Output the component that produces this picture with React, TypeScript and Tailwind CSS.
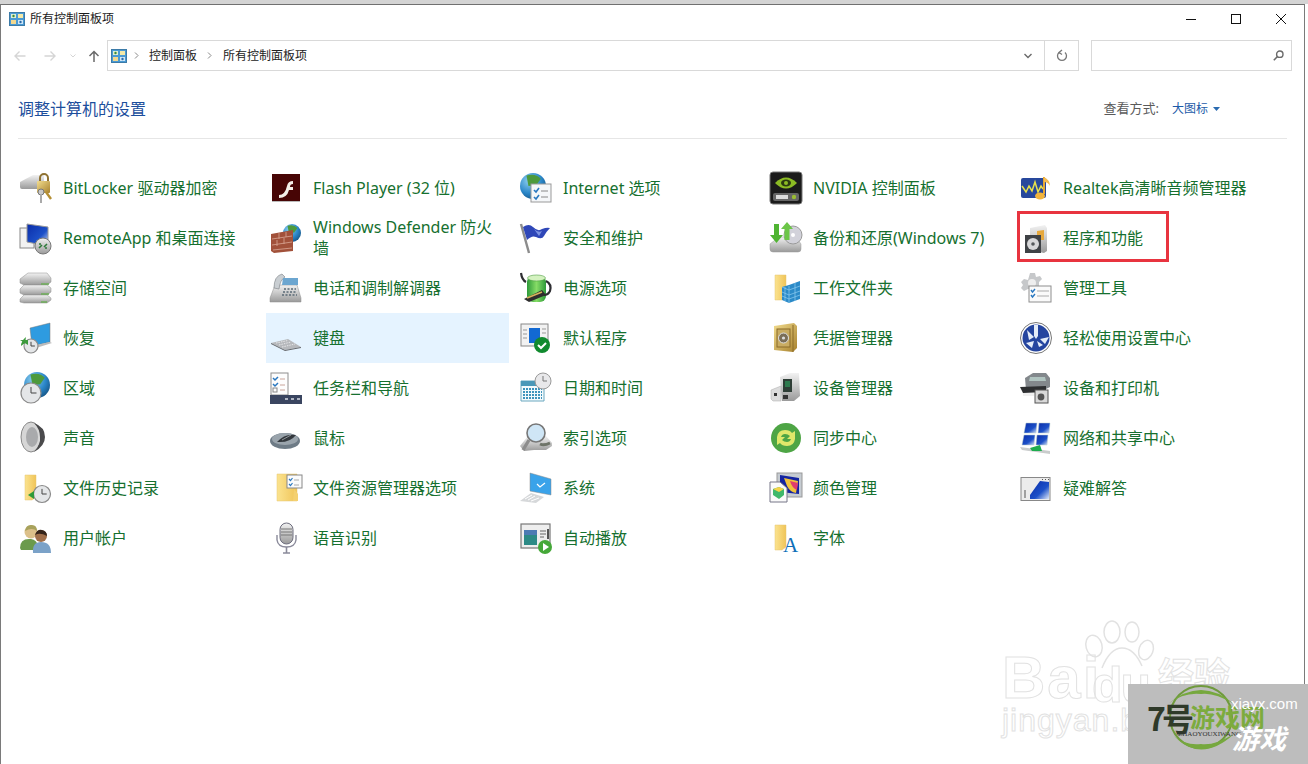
import { ReactNode } from 'react';

function Ico({ children }: { children: ReactNode }) {
  return (
    <svg width="32" height="32" viewBox="0 0 32 32" className="shrink-0 overflow-visible">
      {children}
    </svg>
  );
}

// shared gradients, referenced by the icons below
function Defs() {
  return (
    <svg width="0" height="0" className="absolute">
      <defs>
        <radialGradient id="globe" cx="0.35" cy="0.3" r="0.8">
          <stop offset="0" stopColor="#8fd0f0" />
          <stop offset="0.6" stopColor="#2a86c8" />
          <stop offset="1" stopColor="#14507f" />
        </radialGradient>
        <linearGradient id="folder" x1="0" y1="0" x2="1" y2="0">
          <stop offset="0" stopColor="#fbe38f" />
          <stop offset="1" stopColor="#f0c458" />
        </linearGradient>
        <linearGradient id="silver" x1="0" y1="0" x2="0" y2="1">
          <stop offset="0" stopColor="#f2f2f2" />
          <stop offset="1" stopColor="#9a9a9a" />
        </linearGradient>
        <linearGradient id="screen" x1="0" y1="0" x2="1" y2="1">
          <stop offset="0" stopColor="#0a2ca8" />
          <stop offset="0.6" stopColor="#1c50c8" />
          <stop offset="1" stopColor="#dfe8f8" />
        </linearGradient>
        <linearGradient id="gold" x1="0" y1="0" x2="1" y2="1">
          <stop offset="0" stopColor="#f2dc8e" />
          <stop offset="1" stopColor="#a8822e" />
        </linearGradient>
        <linearGradient id="batt" x1="0" y1="0" x2="1" y2="0">
          <stop offset="0" stopColor="#2e9a3a" />
          <stop offset="0.5" stopColor="#86dc66" />
          <stop offset="1" stopColor="#2e9a3a" />
        </linearGradient>
      </defs>
    </svg>
  );
}

function Globe({ x, y, r }: { x: number; y: number; r: number }) {
  return (
    <g>
      <circle cx={x} cy={y} r={r} fill="url(#globe)" />
      <path
        d={`M${x - r * 0.5} ${y - r * 0.8} q${r * 0.7} ${-r * 0.2} ${r * 1.1} ${r * 0.25} l${-r * 0.35} ${r * 0.5} l${-r * 0.6} ${r * 0.05} z`}
        fill="#4d9a3c"
      />
    </g>
  );
}

function Clock({ x, y, r }: { x: number; y: number; r: number }) {
  return (
    <g>
      <circle cx={x} cy={y} r={r} fill="#e4e6e8" stroke="#8a8a8a" strokeWidth="1.2" />
      <path d={`M${x} ${y - r * 0.6} V${y} H${x + r * 0.55}`} fill="none" stroke="#444" strokeWidth="1" />
    </g>
  );
}

function Folder() {
  return <path d="M5 3 h11 v22 l-4 3 H5 z" fill="url(#folder)" stroke="#e6c572" strokeWidth="0.5" />;
}

function Checklist({ x, y, w, h }: { x: number; y: number; w: number; h: number }) {
  return (
    <g>
      <rect x={x} y={y} width={w} height={h} fill="#fafafa" stroke="#8e8e8e" />
      <path d={`M${x + 2} ${y + 4} l1.5 2 l2.5 -3 M${x + 2} ${y + 9} l1.5 2 l2.5 -3`} fill="none" stroke="#2a78c0" strokeWidth="1.4" />
      <path d={`M${x + 8} ${y + 5} h${w - 10} M${x + 8} ${y + 10} h${w - 10}`} stroke="#aaa" />
    </g>
  );
}

function CPanel({ size }: { size: number }) {
  return (
    <svg width={size} height={size} viewBox="0 0 16 16" className="shrink-0">
      <rect x="0.5" y="1.5" width="15" height="13" fill="#4a9ad4" stroke="#3c7ba8" />
      <rect x="2" y="3" width="5" height="4" fill="#dff0d0" />
      <rect x="9" y="3" width="5" height="4" fill="#f4e9a8" />
      <rect x="2" y="9" width="5" height="4" fill="#f2d890" />
      <rect x="9" y="9" width="5" height="4" fill="#cfe6f6" />
      <circle cx="4.5" cy="5" r="1.2" fill="#3b8a3b" />
      <circle cx="11.5" cy="11" r="1.2" fill="#2a6aa8" />
    </svg>
  );
}

const icons: Record<string, ReactNode> = {
  bitlocker: (
    <Ico>
      <path d="M0 10 L13 3 H24 V17 H2 Q0 17 0 15z" fill="url(#silver)" />
      <path d="M20 10 V6 a4 4 0 0 1 8 0 V10" fill="none" stroke="#8f7232" strokeWidth="2" />
      <rect x="17" y="9" width="13" height="12" rx="1" fill="url(#gold)" />
      <circle cx="21" cy="20" r="3" fill="#c9c9c9" stroke="#777" />
      <rect x="20" y="22" width="2" height="9" fill="#aaa" />
      <path d="M26 20 l5 7" stroke="#b58f34" strokeWidth="2.4" />
    </Ico>
  ),
  flash: (
    <Ico>
      <rect x="2" y="2" width="28" height="27" fill="#470505" />
      <rect x="2" y="29" width="28" height="1" fill="#bbb" />
      <path d="M9 23 q6 0 8 -9 q1 -5 6 -5 v3 q-3 0 -3 3 h3 v3 h-4 q-2 8 -10 8z" fill="#f4efe8" />
    </Ico>
  ),
  ie: (
    <Ico>
      <Globe x={13} y={14} r={13} />
      <rect x="11" y="12" width="20" height="18" fill="#f5f7f9" stroke="#999" />
      <path d="M14 18 l2 2 l3 -4 M14 25 l2 2 l3 -4" fill="none" stroke="#2a78c0" strokeWidth="1.6" />
      <path d="M21 19 h7 M21 25 h7" stroke="#888" />
    </Ico>
  ),
  nvidia: (
    <Ico>
      <rect x="0" y="0" width="32" height="32" rx="3" fill="#1b1b1b" stroke="#777" />
      <path d="M5 11 q11 -11 22 0 q-11 11 -22 0z" fill="#8cbb24" />
      <ellipse cx="16" cy="11" rx="5" ry="3.400" fill="#2c3a10" />
      <circle cx="16" cy="11" r="2" fill="#8cbb24" />
      <rect x="3" y="21" width="26" height="8" rx="2" fill="#666" />
      <rect x="6" y="23" width="12" height="4" fill="#ddd" />
      <circle cx="24" cy="25" r="2.2" fill="#9bbd33" />
    </Ico>
  ),
  realtek: (
    <Ico>
      <rect x="1" y="6" width="25" height="20" rx="2" fill="#27489c" />
      <path d="M2 14 l4 6 l3 -6 l3 5 l3 -9 l3 10 l3 -6 l2 3" fill="none" stroke="#e9e24a" strokeWidth="1.5" />
      <path d="M24 5 V22" stroke="#e8a832" strokeWidth="2" />
      <path d="M24 5 q6 3 6 9 q-2 -4 -6 -4z" fill="#f2bb52" />
      <ellipse cx="20" cy="24" rx="5" ry="3.5" fill="#f2b43c" />
    </Ico>
  ),
  remote: (
    <Ico>
      <rect x="0" y="6" width="14" height="20" fill="#f2f2f2" stroke="#888" />
      <path d="M7 2 L28 5 V24 L7 20z" fill="url(#screen)" stroke="#999" />
      <circle cx="23" cy="24" r="8" fill="url(#silver)" stroke="#777" />
      <path d="M19 26 l3 -3 M27 22 l-3 3 M19 22 h2 M25 26 h2" stroke="#2e7a3a" strokeWidth="1.6" />
    </Ico>
  ),
  firewall: (
    <Ico>
      <Globe x={22} y={11} r={9} />
      <path d="M1 12 L23 8 V29 L4 31 L1 29z" fill="#a2513a" />
      <path d="M2 17 L22 14 M2 23 L22 20 M3 28 L22 26 M9 11 V17 M16 10 V15 M7 18 V24 M14 16 V22" stroke="#d9a796" strokeWidth="0.8" />
    </Ico>
  ),
  flag: (
    <Ico>
      <path d="M1 2 L9 31" stroke="#8c8c8c" strokeWidth="2.4" />
      <path d="M3 5 q6 -4 10 0 q5 5 9 2 q5 -2 8 -1 q-4 4 -6 8 q-2 4 -8 1 q-4 -2 -9 3z" fill="#2f47b8" />
      <path d="M14 7 q4 4 8 2 l-3 5z" fill="#7d93e2" />
    </Ico>
  ),
  backup: (
    <Ico>
      <path d="M0 22 L9 15 H26 L31 22 V27 Q31 30 28 30 H3 Q0 30 0 27z" fill="url(#silver)" stroke="#999" strokeWidth="0.5" />
      <circle cx="23" cy="13" r="9" fill="#d2d2da" stroke="#9a9a9a" />
      <circle cx="23" cy="13" r="2" fill="#fff" />
      <path d="M4 2 h5 v11 h4 l-6.500 8 l-6.500 -8 h4z" fill="#4fb432" />
      <path d="M17 0 l6 7 h-3.500 v11 h-5 V7 H11z" fill="#6cc648" />
    </Ico>
  ),
  programs: (
    <Ico>
      <path d="M10 6 L25 3 L27 6 V29 L24 31 L10 28z" fill="url(#silver)" />
      <path d="M17 9 L24 8 V18 H17z" fill="#e6a83c" />
      <rect x="5" y="13" width="16" height="18" fill="#3f4246" />
      <circle cx="13" cy="22" r="6" fill="#d8d8da" />
      <circle cx="13" cy="22" r="1.8" fill="#55585c" />
    </Ico>
  ),
  storage: (
    <Ico>
      <path d="M0 7 L8 1 H27 L31 6 V10 L27 13 H4 L0 11z" fill="url(#silver)" stroke="#8d8d8d" strokeWidth="0.5" />
      <path d="M0 17 L4 13 H27 L31 16 V20 L27 23 H4 L0 21z" fill="url(#silver)" stroke="#8d8d8d" strokeWidth="0.5" />
      <path d="M0 27 L4 23 H27 L31 26 V28 L27 31 H4 L0 30z" fill="url(#silver)" stroke="#8d8d8d" strokeWidth="0.5" />
      <path d="M21 12 h8 M21 22 h8 M21 30 h6" stroke="#6fae5a" strokeWidth="1.4" />
    </Ico>
  ),
  phone: (
    <Ico>
      <path d="M0 26 L5 13 H27 L31 26 V30 H0z" fill="url(#silver)" stroke="#8c8c8c" strokeWidth="0.5" />
      <path d="M4 16 Q4 4 12 2 L15 5 Q10 8 9 17z" fill="#c9ced2" stroke="#7a8084" strokeWidth="0.6" />
      <path d="M13 6 H28 L28 13 H12z" fill="#6ca6d0" />
      <path d="M14 17 h12 M13 20 h13 M12 23 h15" stroke="#5a6a76" strokeDasharray="2 1.5" strokeWidth="1.4" />
    </Ico>
  ),
  power: (
    <Ico>
      <rect x="7" y="4" width="19" height="26" rx="6" fill="url(#batt)" />
      <ellipse cx="16.5" cy="6" rx="9" ry="3" fill="#d4f2c0" stroke="#4f9e42" strokeWidth="0.6" />
      <path d="M1 1 Q2 8 6 10 M26 9 Q32 12 30 19 Q28 23 24 23" fill="none" stroke="#2e2e32" strokeWidth="2.2" />
      <path d="M4 27 L22 18 L26 23 L9 30z" fill="#2e2e2e" />
      <path d="M7 26 L22 20" stroke="#d8b45c" strokeWidth="1.6" />
    </Ico>
  ),
  work: (
    <Ico>
      <Folder />
      <path d="M19 13 L30 9 V27 L19 31 L12 28 V15z" fill="#2b8ac8" />
      <path d="M12 20 L19 23 L30 19 M12 24 L19 27 L30 23 M19 14 V31 M15 15 V29 M25 11 V29 M12 15 L19 18 L30 14" fill="none" stroke="#8fcdf0" strokeWidth="0.7" />
    </Ico>
  ),
  tools: (
    <Ico>
      <path d="M10 1 h5 l1 4 l4 -1 l2 3 l-3 3 v7 H8 L4 19 l-3 -3 l2 -3 l-2 -3 l3 -3 l4 1z" fill="#c6c8ca" />
      <circle cx="12" cy="11" r="4" fill="#eee" />
      <Checklist x={9} y={14} w={22} h={16} />
    </Ico>
  ),
  restore: (
    <Ico>
      <path d="M10 6 L30 1 V20 L12 24z" fill="#2e9be0" stroke="#777" strokeWidth="0.5" />
      <path d="M30 20 L32 21 L16 26 L12 24z" fill="#bbb" />
      <Clock x={11} y={24} r={7} />
      <path d="M6 15 Q1 19 1 24 L5 21z" fill="#3c9a3c" />
      <path d="M0 18 h8 v5z" fill="#3c9a3c" />
    </Ico>
  ),
  keyboard: (
    <Ico>
      <path d="M1 21 L18 17 L31 25 L15 28z" fill="#b6b8bc" />
      <path d="M6 21 L18 18.500 M9 23 L21 20 M12 25 L25 22" stroke="#e6e6e8" strokeWidth="1" strokeDasharray="1.5 1" />
      <path d="M1 21.500 L15 28.500 L31 25.500" fill="none" stroke="#66686c" strokeWidth="1" />
    </Ico>
  ),
  defaults: (
    <Ico>
      <rect x="1" y="2" width="27" height="22" fill="#f2f2f2" stroke="#888" />
      <rect x="9" y="6" width="11" height="15" fill="#1269d3" />
      <path d="M3 8 h4 M3 12 h4 M3 16 h4 M22 7 h4 M22 11 h4" stroke="#999" />
      <circle cx="22" cy="23" r="8" fill="#118a2e" />
      <path d="M18 23 l3 3 l5 -5" fill="none" stroke="#fff" strokeWidth="2" />
    </Ico>
  ),
  credential: (
    <Ico>
      <path d="M4 4 L24 1 L27 4 V26 L23 30 L4 28z" fill="url(#gold)" />
      <path d="M23 3 V30" stroke="#8a6a28" />
      <rect x="7" y="7" width="13" height="18" fill="#c9ac62" stroke="#8a6a28" />
      <circle cx="13.5" cy="16" r="5" fill="#7a6e58" stroke="#ddd" />
      <circle cx="13.5" cy="16" r="1.6" fill="#ddd" />
    </Ico>
  ),
  access: (
    <Ico>
      <circle cx="16" cy="16" r="15.5" fill="#fff" stroke="#777" />
      <circle cx="16" cy="16" r="13.5" fill="#25459f" />
      <path d="M14 3 h4 v11 l-2 3 l-2 -3z M29 15 l-9 2 l5 5z M7 8 l7 7 l-5 3z M6 21 l8 -2 l-2 7z M19 25 l-2 -6 l6 4z" fill="#e4ecf8" />
    </Ico>
  ),
  region: (
    <Ico>
      <Globe x={17} y={13} r={13} />
      <Clock x={11} y={21} r={10} />
    </Ico>
  ),
  taskbar: (
    <Ico>
      <rect x="1" y="1" width="17" height="22" fill="#fdfdfd" stroke="#8e8e8e" />
      <path d="M3 6 l2 2 l3 -3 M3 12 l2 2 l3 -3" fill="none" stroke="#2a78c0" strokeWidth="1.5" />
      <path d="M10 7 h5 M10 13 h5 M10 18 h5" stroke="#c9a49a" />
      <rect x="3" y="16" width="4" height="4" fill="none" stroke="#888" />
      <rect x="0" y="23" width="32" height="9" fill="#3a4560" />
      <path d="M15 27 h3 M21 27 h3 M27 27 h3" stroke="#b0b6c4" strokeWidth="2" />
    </Ico>
  ),
  calendar: (
    <Ico>
      <path d="M1 9 H24 V29 H1z" fill="#f4fafc" stroke="#6aa8c0" />
      <rect x="1" y="9" width="23" height="5" fill="#4a98b8" />
      <path d="M3 17 h19 M3 20 h19 M3 23 h19 M3 26 h19" stroke="#3e94bc" strokeWidth="2" strokeDasharray="2 1" />
      <circle cx="23" cy="9" r="8" fill="#e8e8ea" stroke="#999" />
      <path d="M23 4 V9 H27" fill="none" stroke="#777" />
    </Ico>
  ),
  devices: (
    <Ico>
      <path d="M10 5 L20 1 H29 L30 24 L24 29 H12z" fill="url(#silver)" />
      <rect x="13" y="7" width="9" height="13" fill="#2e3e36" />
      <path d="M15 9 h5 v6 h-5z" fill="#2e7a4e" />
      <path d="M1 18 L11 14 V29 H3 L1 27z" fill="#dcdcdc" stroke="#aaa" strokeWidth="0.5" />
      <path d="M4 21 h3 v3 h-3z M13 23 h5 v4 h-5z" fill="#333" />
    </Ico>
  ),
  printers: (
    <Ico>
      <path d="M5 6 L13 1 H26 L30 6 V15 L24 18 H6z" fill="#83888c" />
      <path d="M10 5 H25 L26 9 H9z" fill="#b0c4c0" />
      <path d="M0 15 L26 14 L26 20 L3 21z" fill="#2d2f31" />
      <path d="M3 21 H14 V24 H3z" fill="#f0f0f0" />
      <rect x="15" y="18" width="13" height="13" fill="#d9d9d9" stroke="#555" />
      <circle cx="21" cy="25" r="3.4" fill="#555" />
    </Ico>
  ),
  mouse: (
    <Ico>
      <ellipse cx="15" cy="19" rx="15" ry="8" fill="#6e7b86" />
      <ellipse cx="15" cy="17" rx="13" ry="6" fill="#9aa4ac" />
      <path d="M7 20 Q15 11 26 13 Q20 21 7 20z" fill="#33383d" />
      <path d="M12 18 L21 13" stroke="#8f959a" strokeWidth="1" />
    </Ico>
  ),
  index: (
    <Ico>
      <path d="M0 24 L8 14 H26 L32 21 V24 L26 28 H14 L4 29z" fill="url(#silver)" />
      <circle cx="16" cy="11" r="9" fill="#cfe6f6" stroke="#777" strokeWidth="1.6" />
      <path d="M9 18 L3 28" stroke="#8c8c8c" strokeWidth="3.4" />
      <path d="M20 22 q4 2 10 -1" fill="none" stroke="#6e7468" strokeWidth="3" />
    </Ico>
  ),
  sync: (
    <Ico>
      <circle cx="16" cy="16" r="15" fill="#4ea545" />
      <path d="M7 15 Q8 8 15 8 Q20 8 22 11 L25 9 V17 H17 L20 14 Q18 12 15 12 Q12 12 11 15z" fill="#dfe76a" />
      <path d="M25 17 Q24 24 17 24 Q12 24 10 21 L7 23 V15 H15 L12 18 Q14 20 17 20 Q20 20 21 17z" fill="#dfe76a" />
    </Ico>
  ),
  network: (
    <Ico>
      <path d="M6 1 H17 L16 11 H4z" fill="url(#screen)" stroke="#bcc" strokeWidth="0.5" />
      <path d="M19 1 H30 L29 11 H18z" fill="url(#screen)" stroke="#bcc" strokeWidth="0.5" />
      <path d="M4 13 H15 L14 23 H2z" fill="url(#screen)" stroke="#bcc" strokeWidth="0.5" />
      <path d="M17 13 H28 L27 23 H16z" fill="url(#screen)" stroke="#bcc" strokeWidth="0.5" />
      <path d="M0 25 L30 29 V32 L2 28z" fill="#c9cccc" />
      <path d="M10 26 L20 23 L22 29 L12 29z" fill="#1dad4e" />
    </Ico>
  ),
  sound: (
    <Ico>
      <ellipse cx="11" cy="15" rx="10" ry="15" fill="#d6d6d6" stroke="#888" strokeWidth="1" />
      <path d="M14 1 Q25 5 25 15 Q25 24 14 30 Q21 22 20 15 Q20 7 14 1z" fill="#4a4a4c" />
      <ellipse cx="12" cy="15" rx="6" ry="10" fill="#a9aaac" />
    </Ico>
  ),
  history: (
    <Ico>
      <Folder />
      <Clock x={22} y={22} r={8.5} />
      <path d="M14 19 L8 23 L14 27z" fill="#2f9a3a" />
    </Ico>
  ),
  explorer: (
    <Ico>
      <path d="M7 2 H27 V29 H7z" fill="url(#folder)" stroke="#e6c572" strokeWidth="0.5" />
      <path d="M24 17 l4 5 v7 h-5z" fill="#f4d070" />
      <rect x="17" y="3" width="15" height="13" fill="#fbfbfb" stroke="#888" />
      <path d="M19 7 l1.5 1.5 l2 -2.5 M19 12 l1.5 1.5 l2 -2.5" fill="none" stroke="#2a78c0" strokeWidth="1.2" />
      <path d="M24 8 h5 M24 13 h5" stroke="#aaa" />
    </Ico>
  ),
  system: (
    <Ico>
      <path d="M10 1 L31 7 V23 L10 19z" fill="#3aa3ea" stroke="#888" strokeWidth="0.5" />
      <path d="M17 12 l3 3 l5 -4" fill="none" stroke="#fff" strokeWidth="1.2" />
      <path d="M0 29 L11 21 L24 25 L16 31 Z" fill="#d6d8da" />
      <path d="M5 27 L12 23 M8 28 L15 24 M11 29 L19 26" stroke="#fff" />
    </Ico>
  ),
  color: (
    <Ico>
      <rect x="7" y="1" width="25" height="24" fill="#c6ccd2" stroke="#999" />
      <path d="M10 3 L29 6 V22 L10 20z" fill="#1424a0" />
      <path d="M14 6 L28 9 L26 21 Q20 20 17 14z" fill="#f0c23c" />
      <path d="M20 9 L28 11 L27 18 Q22 16 20 9z" fill="#e03c6e" />
      <path d="M0 10 H10 L17 16 V30 H0z" fill="#fafafa" stroke="#778" />
      <path d="M3 17 L9 15 L14 17 V23 L9 27 L3 23z" fill="#3fb86b" />
      <path d="M3 17 L9 15 L14 17 L9 20z" fill="#f5d34a" />
    </Ico>
  ),
  ts: (
    <Ico>
      <rect x="1" y="5.500" width="29" height="23" fill="#ececec" stroke="#888" />
      <path d="M10 23 L20 9 L29 10 V27 H10z" fill="url(#screen)" />
      <path d="M5 18 v8 M22 7.500 h1 M25 7.500 h1 M28 7.500 h1" stroke="#555" />
    </Ico>
  ),
  users: (
    <Ico>
      <circle cx="11" cy="10" r="6.5" fill="#dcc08a" />
      <path d="M5 9 Q6 2 12 3 Q17 3 17 9 Q12 5 5 9z" fill="#a8a25c" />
      <path d="M0 26 Q0 16 11 17 Q17 18 18 24 L14 28 H1z" fill="#6b9a4c" />
      <circle cx="21" cy="14" r="6" fill="#a06f4a" />
      <path d="M15 13 Q17 7 22 8 Q27 9 27 14 Q20 10 15 13z" fill="#35241a" />
      <path d="M13 31 Q12 20 21 20 Q31 20 31 31z" fill="#7ba2c8" />
    </Ico>
  ),
  mic: (
    <Ico>
      <rect x="10" y="1" width="13" height="21" rx="6.5" fill="url(#silver)" stroke="#6e6e7e" />
      <path d="M11 7 h11 M11 10 h11 M11 13 h11" stroke="#777" />
      <path d="M7 13 V18 Q8 25 16.500 25 Q25 25 26 18 V13" fill="none" stroke="#8a8a9a" strokeWidth="1.4" />
      <path d="M16.500 25 V31 M13 31 H20" stroke="#8a8a9a" strokeWidth="1.6" />
    </Ico>
  ),
  autoplay: (
    <Ico>
      <rect x="1" y="2" width="29" height="24" fill="#eeeeee" stroke="#777" strokeWidth="1.2" />
      <rect x="4" y="8" width="13" height="15" fill="#2c8a86" />
      <rect x="4" y="8" width="13" height="5" fill="#4c7bb4" />
      <path d="M20 9 h6 M20 12 h6 M20 15 h4" stroke="#666" />
      <path d="M28 7 V17" stroke="#222" strokeWidth="1.5" />
      <circle cx="25" cy="25" r="7" fill="#45a838" />
      <path d="M23 21 L29 25 L23 29z" fill="#fff" />
    </Ico>
  ),
  font: (
    <Ico>
      <Folder />
      <text x="13" y="30" fill="#0f6fb8" fontSize="21" fontFamily="'Liberation Serif', serif">
        A
      </text>
    </Ico>
  ),
};

const rows: [string, string][] = [
  ['BitLocker 驱动器加密', 'bitlocker'],
  ['Flash Player (32 位)', 'flash'],
  ['Internet 选项', 'ie'],
  ['NVIDIA 控制面板', 'nvidia'],
  ['Realtek高清晰音频管理器', 'realtek'],
  ['RemoteApp 和桌面连接', 'remote'],
  ['Windows Defender 防火墙', 'firewall'],
  ['安全和维护', 'flag'],
  ['备份和还原(Windows 7)', 'backup'],
  ['程序和功能', 'programs'],
  ['存储空间', 'storage'],
  ['电话和调制解调器', 'phone'],
  ['电源选项', 'power'],
  ['工作文件夹', 'work'],
  ['管理工具', 'tools'],
  ['恢复', 'restore'],
  ['键盘', 'keyboard'],
  ['默认程序', 'defaults'],
  ['凭据管理器', 'credential'],
  ['轻松使用设置中心', 'access'],
  ['区域', 'region'],
  ['任务栏和导航', 'taskbar'],
  ['日期和时间', 'calendar'],
  ['设备管理器', 'devices'],
  ['设备和打印机', 'printers'],
  ['声音', 'sound'],
  ['鼠标', 'mouse'],
  ['索引选项', 'index'],
  ['同步中心', 'sync'],
  ['网络和共享中心', 'network'],
  ['文件历史记录', 'history'],
  ['文件资源管理器选项', 'explorer'],
  ['系统', 'system'],
  ['颜色管理', 'color'],
  ['疑难解答', 'ts'],
  ['用户帐户', 'users'],
  ['语音识别', 'mic'],
  ['自动播放', 'autoplay'],
  ['字体', 'font'],
];

function Item({ label, icon }: { label: string; icon: string }) {
  const hot = icon === 'keyboard';
  return (
    <div className={`flex items-center gap-[11px] pl-[4px] ${hot ? 'bg-[#e5f3ff]' : ''}`}>
      {icons[icon]}
      <span className="min-w-0 flex-1 pr-[8px] text-[16px] leading-[21px] text-[#16702f]">{label}</span>
    </div>
  );
}

function Watermarks() {
  return (
    <div className="absolute inset-0 pointer-events-none font-['Liberation_Sans',sans-serif]">
      <span className="absolute left-[1002px] top-[647px] text-[60px] leading-[62px] font-bold tracking-[2px] text-transparent [-webkit-text-stroke:1px_#e2e2e2]">
        Bai
      </span>
      <span className="absolute left-[1092px] top-[660px] text-[50px] leading-[50px] font-bold tracking-[-2px] text-transparent [-webkit-text-stroke:1px_#e2e2e2]">
        du
      </span>
      <span className="absolute left-[1158px] top-[655px] text-[36px] leading-[36px] font-bold text-transparent [-webkit-text-stroke:1px_#e2e2e2] font-['Noto_Sans_CJK_SC',sans-serif]">
        经验
      </span>
      <span className="absolute left-[1002px] top-[702px] text-[32px] leading-[36px] tracking-[1px] text-transparent [-webkit-text-stroke:1px_#e2e2e2]">
        jingyan.baidu.com
      </span>
      <svg width="80" height="56" viewBox="0 0 80 56" className="absolute left-[1080px] top-[620px]" fill="none" stroke="#e2e2e2" strokeWidth="1.5">
        <ellipse cx="14" cy="26" rx="8" ry="11" transform="rotate(-15 14 26)" />
        <ellipse cx="32" cy="12" rx="8" ry="11" />
        <ellipse cx="52" cy="12" rx="7" ry="10" />
        <ellipse cx="66" cy="30" rx="7" ry="10" transform="rotate(20 66 30)" />
        <path d="M22 48 Q30 28 42 28 Q54 28 62 46" />
      </svg>

      <div className="absolute left-[1128px] top-[684px] h-[80px] w-[180px] overflow-hidden bg-[#bdbdbd]">
        <svg width="100" height="80" viewBox="0 0 100 80" className="absolute left-[26px] top-0">
          <circle cx="47" cy="33" r="31" fill="none" stroke="#6f9a3c" strokeWidth="2" />
          <path d="M14 20 Q47 -8 80 20 Q60 8 47 10 Q30 8 14 20z" fill="#76a83e" />
          <path d="M20 52 Q47 80 80 50 Q60 62 47 60 Q32 62 20 52z" fill="#76a83e" />
        </svg>
        <span className="absolute left-[19px] top-[15px] text-[32px] leading-[36px] font-bold text-[#2f3a2a] font-['Noto_Sans_CJK_SC',sans-serif] tracking-[-4px]">
          7号
        </span>
        <span className="absolute left-[62px] top-[18px] text-[25px] leading-[28px] font-bold text-[#7cab3e] font-['Noto_Sans_CJK_SC',sans-serif]">
          游戏网
        </span>
        <span className="absolute left-[103px] top-[11px] text-[15px] leading-[18px] text-white">xiayx.com</span>
        <span className="absolute left-[50px] top-[46px] text-[7px] leading-[8px] text-[#333] font-['Liberation_Serif',serif]">
          ZHAOYOUXIWANG
        </span>
        <span className="absolute left-[104px] top-[38px] text-[27px] leading-[32px] font-bold italic text-white font-['Noto_Sans_CJK_SC',sans-serif]">
          游戏
        </span>
      </div>
    </div>
  );
}

export default function App() {
  return (
    <div className="relative h-[764px] w-[1308px] overflow-hidden bg-white font-['Noto_Sans','Noto_Sans_CJK_SC',sans-serif]">
      <Defs />
      <div className="h-[4px] bg-[#d4d4d4]" />
      <div className="h-[760px] w-[1305px] border-x border-t border-x-[#7a7a7a] border-t-[#707070] border-b-0">
        {/* title bar */}
        <div className="flex h-[28px] items-center pl-[8px] pr-[18px] text-[12px] text-[#1a1a1a]">
          <CPanel size={16} />
          <span className="ml-[5px]">所有控制面板项</span>
          <div className="ml-auto flex items-center gap-[35px]">
            <svg width="10" height="10" viewBox="0 0 10 10">
              <path d="M0 5.500 H10" stroke="#111" />
            </svg>
            <svg width="10" height="10" viewBox="0 0 10 10">
              <rect x="0.500" y="0.500" width="9" height="9" fill="none" stroke="#111" />
            </svg>
            <svg width="10" height="10" viewBox="0 0 10 10">
              <path d="M0 0 L10 10 M10 0 L0 10" stroke="#111" />
            </svg>
          </div>
        </div>

        {/* address row */}
        <div className="mt-[7px] flex h-[31px] items-center">
          <div className="flex w-[106px] items-center pl-[13px]">
            <svg width="12" height="12" viewBox="0 0 12 12">
              <path d="M11.500 6 H1 M5.500 1.500 L1 6 L5.500 10.500" fill="none" stroke="#d5d5d5" strokeWidth="1.4" />
            </svg>
            <svg width="12" height="12" viewBox="0 0 12 12" className="ml-[18px]">
              <path d="M0.500 6 H11 M6.500 1.500 L11 6 L6.500 10.500" fill="none" stroke="#d5d5d5" strokeWidth="1.4" />
            </svg>
            <svg width="6" height="4" viewBox="0 0 6 4" className="ml-[14px]">
              <path d="M0.500 0.500 L3 3 L5.500 0.500" fill="none" stroke="#d5d5d5" />
            </svg>
            <svg width="12" height="12" viewBox="0 0 12 12" className="ml-[12px]">
              <path d="M6 12 V1.500 M1.500 6 L6 1.500 L10.500 6" fill="none" stroke="#6a6a6a" strokeWidth="1.5" />
            </svg>
          </div>
          <div className="flex h-full w-[972px] items-center border border-[#d9d9d9] pl-[3px] text-[12px] text-[#222]">
            <CPanel size={16} />
            <svg width="5" height="7" viewBox="0 0 5 7" className="ml-[7px]">
              <path d="M1 0.500 L4 3.500 L1 6.500" fill="none" stroke="#888" />
            </svg>
            <span className="ml-[10px]">控制面板</span>
            <svg width="5" height="7" viewBox="0 0 5 7" className="ml-[10px]">
              <path d="M1 0.500 L4 3.500 L1 6.500" fill="none" stroke="#888" />
            </svg>
            <span className="ml-[11px]">所有控制面板项</span>
            <svg width="8" height="6" viewBox="0 0 8 6" className="ml-auto mr-[12px]">
              <path d="M0.500 1 L4 4.500 L7.500 1" fill="none" stroke="#6a6a6a" strokeWidth="1.4" />
            </svg>
            <div className="flex h-full w-[34px] items-center justify-center border-l border-[#d9d9d9]">
              <svg width="12" height="13" viewBox="0 0 12 13">
                <path d="M3 3.500 A4.500 4.500 0 1 0 9 3.500 M6 1 L3 3.500 L6 5.500" fill="none" stroke="#777" strokeWidth="1.3" />
              </svg>
            </div>
          </div>
          <div className="ml-[12px] flex h-full w-[201px] items-center justify-end border border-[#d9d9d9] pr-[7px]">
            <svg width="11" height="11" viewBox="0 0 11 11">
              <circle cx="6.800" cy="4.200" r="3.200" fill="none" stroke="#6a6a6a" strokeWidth="1.4" />
              <path d="M4.500 6.500 L0.800 10.200" stroke="#6a6a6a" strokeWidth="1.6" />
            </svg>
          </div>
        </div>

        {/* heading */}
        <div className="ml-[17px] mr-[17px] flex h-[68px] items-center border-b border-[#e6e6e6] pt-[8px]">
          <span className="text-[16px] text-[#1c4e9c]">调整计算机的设置</span>
          <span className="ml-auto text-[13px] text-[#5a5a5a]">查看方式:</span>
          <span className="ml-[13px] text-[12px] text-[#1c5aa8]">大图标</span>
          <svg width="7" height="4" viewBox="0 0 7 4" className="ml-[5px] mr-[67px]">
            <path d="M0 0 H7 L3.500 4z" fill="#2a6ab0" />
          </svg>
        </div>

        {/* items */}
        <div className="grid grid-cols-[repeat(5,243px)] auto-rows-[50px] gap-x-[7px] pl-[15px] pt-[24px]">
          {rows.map(([label, icon]) => (
            <Item key={icon} label={label} icon={icon} />
          ))}
        </div>
      </div>

      {/* annotation drawn over the screenshot */}
      <div className="absolute left-[1017px] top-[211px] h-[51px] w-[152px] border-[3px] border-[#e8343f]" />
      <Watermarks />
    </div>
  );
}
